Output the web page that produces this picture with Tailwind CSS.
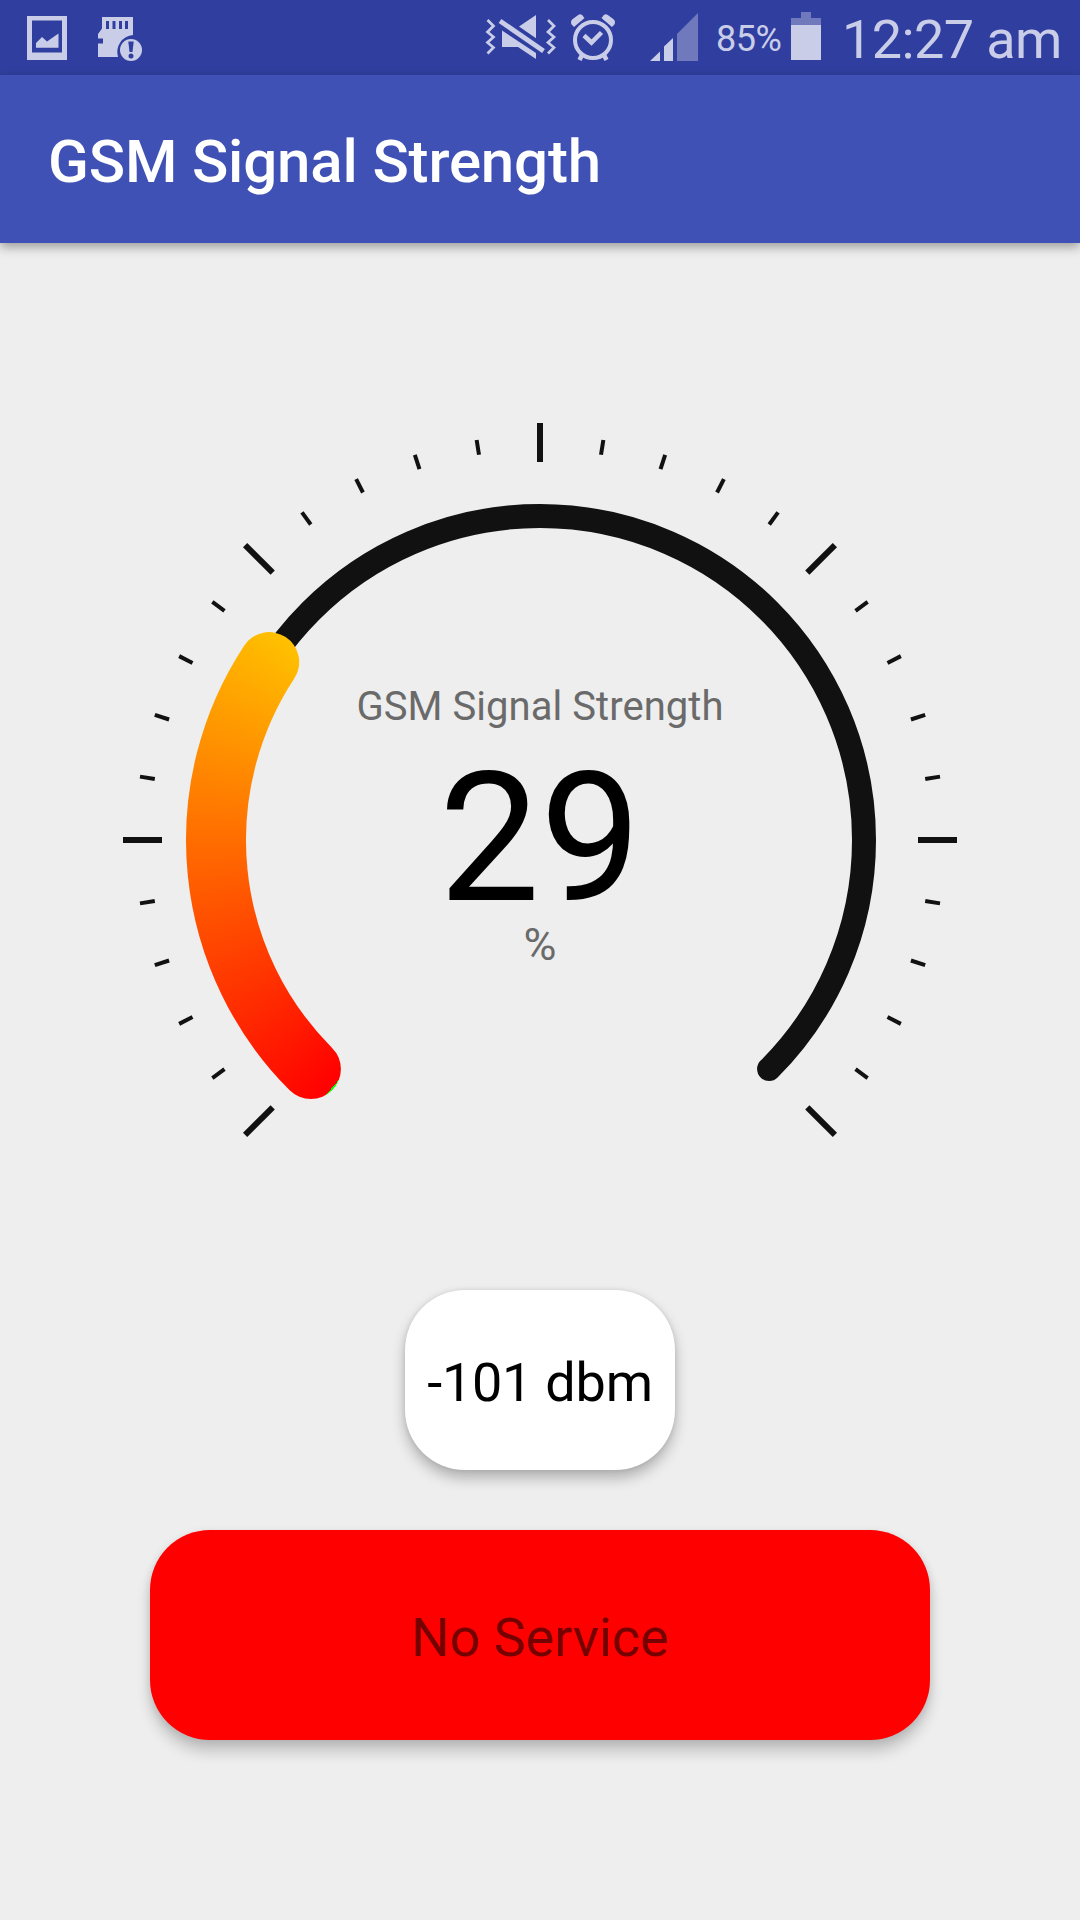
<!DOCTYPE html>
<html lang="en">
<head>
<meta charset="utf-8">
<title>GSM Signal Strength</title>
<script src="https://cdn.jsdelivr.net/npm/@tailwindcss/browser@4"></script>
</head>
<body class="w-[1080px] h-[1920px] overflow-hidden bg-[#eeeeee] font-['Roboto',sans-serif] flex flex-col">
  <!-- Status bar -->
  <div class="h-[75px] shrink-0 bg-[#303f9f] flex text-[#c9cde8]">
    <svg class="w-[700px] h-[75px] shrink-0" viewBox="0 0 700 75" fill="currentColor">
      <!-- picture -->
      <path fill-rule="evenodd" d="M27 16H67V60H27ZM32 20.5V52.500H62V20.500ZM36 47.700V43L42 37L47 41.500L58.500 33.500V47.700Z"/>
      <!-- memory card with warning -->
      <path fill-rule="evenodd" d="M102 17H133V35A17 17 0 0 0 118 57H98V43.500H103V38.500H98V34L102 28.500ZM106 21V29H109V21ZM112.500 21V29H115.500V21ZM119 21V29H122V21ZM125 21V29H128V21Z"/>
      <circle cx="131" cy="50" r="11"/>
      <path fill="#303f9f" d="M128.300 41.500H133.700L132.500 52H129.500Z"/>
      <circle cx="131" cy="56" r="2.500" fill="#303f9f"/>
      <!-- muted, vibrating -->
      <g fill="none" stroke="currentColor" stroke-width="2.700">
        <path d="M487.500 20L493.500 26L487.500 32L493.500 37L487.500 42.500L493.500 47.500L487.500 53.500"/>
        <path d="M548 20L554 26L548 32L554 37L548 42.500L554 47.500L548 53.500"/>
        <path stroke-width="4.800" d="M500 21L543.500 51"/>
      </g>
      <path d="M519 26.500L536 15V38.300ZM502 30.500L536 53V59L518 47H502Z"/>
      <!-- alarm -->
      <g fill="none" stroke="currentColor">
        <circle cx="593" cy="40" r="18" stroke-width="4"/>
        <path stroke-width="4.500" d="M584 35.500L591.500 42.500L601.500 32.500"/>
        <path stroke-width="4.500" d="M582.500 54L579.500 60M603.500 54L606.500 60"/>
        <path stroke-width="6" stroke-linecap="round" d="M574.500 21.500L580 17.500M611.500 21.500L606 17.500"/>
      </g>
      <path d="M571.200 21V24L574 27L584.500 18L582 15ZM614.800 21V24L612 27L601.500 18L604 15Z"/>
      <!-- signal bars -->
      <path d="M650 61L660 51.500V61ZM664 61V46.500L673 38V61Z"/>
      <path fill="#6f79bc" d="M677 61V34L698 13V61Z"/>
    </svg>
    <div class="w-[91px] pl-[16px] pt-[18px] text-[36px] leading-[42px] tracking-[-0.500px] whitespace-nowrap">85%</div>
    <svg class="w-[30px] h-[75px] shrink-0" viewBox="0 0 30 75">
      <path fill="#6f79bc" d="M10 12H20V18H30V25H0V18H10Z"/>
      <path fill="currentColor" d="M0 25H30V60H0Z"/>
    </svg>
    <div class="pl-[21px] pt-[9px] text-[54px] leading-[62px] tracking-[-0.6px] whitespace-nowrap">12:27 am</div>
  </div>

  <!-- App bar -->
  <header class="h-[168px] shrink-0 bg-[#3f51b5] flex items-center pl-[48px] pt-[5px] shadow-[0_4px_10px_rgba(0,0,0,0.35)]">
    <h1 class="text-white text-[60px] leading-[70px] font-medium tracking-[-0.16px] whitespace-nowrap">GSM Signal Strength</h1>
  </header>

  <main class="flex flex-col items-center pt-[57px]">
    <!-- Gauge -->
    <section class="grid w-[1080px] h-[900px]">
      <svg class="col-start-1 row-start-1 w-[1080px] h-[900px]" viewBox="0 0 1080 900">
        <defs>
          <mask id="progress" maskUnits="userSpaceOnUse" x="0" y="0" width="1080" height="900">
            <path d="M310.900 769.100A324 324 0 0 1 269.200 362.100" fill="none" stroke="#fff" stroke-width="60" stroke-linecap="round"/>
          </mask>
        </defs>
        <g id="ticks" stroke="#111111"></g>
        <path d="M310.900 769.100A324 324 0 1 1 769.100 769.100" fill="none" stroke="#111111" stroke-width="24" stroke-linecap="round"/>
        <g mask="url(#progress)">
          <foreignObject x="140" y="140" width="800" height="800">
            <div class="w-[800px] h-[800px] bg-[conic-gradient(from_220deg,#ff0000_0deg,#ffff00_117deg,#00ff00_240deg,#00ff00_360deg)]"></div>
          </foreignObject>
        </g>
      </svg>
      <div class="col-start-1 row-start-1 flex flex-col items-center pt-[383px] text-[#6a6a6a]">
        <div class="text-[40px] leading-[47px] tracking-[0.05px] whitespace-nowrap">GSM Signal Strength</div>
        <div class="text-[180px] leading-[150px] mt-[34px] text-black">29</div>
        <div class="text-[45px] leading-[52px] mt-[5px]">%</div>
      </div>
    </section>

    <div class="mt-[90px] w-[270px] h-[180px] pt-[5px] rounded-[60px] bg-white flex items-center justify-center text-[54px] tracking-[-0.25px] text-black whitespace-nowrap shadow-[0_8px_14px_rgba(0,0,0,0.26),0_0_5px_rgba(0,0,0,0.1)]">-101 dbm</div>
    <div class="mt-[60px] w-[780px] h-[210px] pt-[5px] rounded-[60px] bg-[#ff0000] flex items-center justify-center text-[54px] tracking-[-0.1px] text-black/54 shadow-[0_12px_14px_rgba(0,0,0,0.18),0_2px_8px_rgba(0,0,0,0.1)]">No Service</div>
  </main>
  <script>
    const ticks = document.getElementById('ticks');
    for (let i = 0; i <= 30; i++) {
      const major = i % 5 === 0;
      const line = document.createElementNS('http://www.w3.org/2000/svg', 'line');
      line.setAttribute('x1', major ? 378 : 390);
      line.setAttribute('x2', major ? 417 : 405);
      line.setAttribute('stroke-width', major ? 6 : 4);
      line.setAttribute('transform', `translate(540 540) rotate(${135 + i * 9})`);
      ticks.appendChild(line);
    }
  </script>
</body>
</html>
